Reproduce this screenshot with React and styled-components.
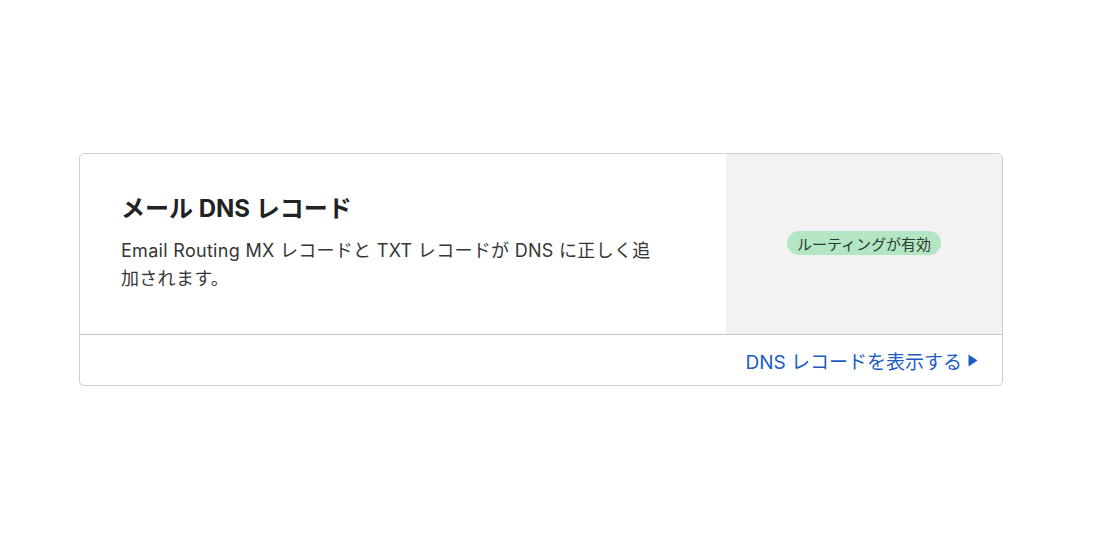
import React from "react";
import styled, { createGlobalStyle } from "styled-components";

const Global = createGlobalStyle`
  html, body { margin: 0; padding: 0; background: #fff; }
  body { font-family: Inter, "Noto Sans CJK JP", sans-serif; }
`;

const Page = styled.div`
  padding: 153px 0 0 79px;
`;

const Card = styled.section`
  width: 924px;
  box-sizing: border-box;
  border: 1px solid #cfcfcf;
  border-radius: 5px;
  overflow: hidden;
  background: #fff;
`;

const Main = styled.div`
  display: grid;
  grid-template-columns: 646px 1fr;
  border-bottom: 1px solid #c9c9c9;
`;

const Content = styled.div`
  padding: 39px 40px 41px 41px;
`;

const Title = styled.h2`
  margin: 0 0 12px;
  font-size: 24px;
  line-height: 32px;
  font-weight: 700;
  color: #222;
`;

const Desc = styled.p`
  margin: 0;
  max-width: 540px;
  font-size: 18px;
  line-height: 28px;
  letter-spacing: 0.3px;
  color: #363636;
`;

const Side = styled.div`
  background: #f2f2f2;
  display: flex;
  align-items: center;
  justify-content: center;
  padding-bottom: 2px;
`;

const Badge = styled.span`
  display: inline-flex;
  align-items: center;
  height: 24px;
  padding: 0 10px;
  border-radius: 12px;
  background: #b3e6c3;
  color: #2c3a31;
  font-size: 15px;
`;

const Footer = styled.div`
  height: 50px;
  display: flex;
  align-items: center;
  justify-content: flex-end;
  padding-right: 24px;
`;

const Link = styled.a`
  display: inline-flex;
  align-items: center;
  gap: 6px;
  color: #1c5cc4;
  font-size: 19px;
  text-decoration: none;
  cursor: pointer;
`;

export default function App() {
  return (
    <>
      <Global />
      <Page>
        <Card>
          <Main>
            <Content>
              <Title>メール DNS レコード</Title>
              <Desc>
                Email Routing MX レコードと TXT レコードが DNS に正しく追加されます。
              </Desc>
            </Content>
            <Side>
              <Badge>ルーティングが有効</Badge>
            </Side>
          </Main>
          <Footer>
            <Link>
              DNS レコードを表示する
              <svg width="10" height="13" viewBox="0 0 10 13" aria-hidden="true">
                <path d="M0.5 0.5 L9.5 6.5 L0.5 12.5 Z" fill="#1c5cc4" />
              </svg>
            </Link>
          </Footer>
        </Card>
      </Page>
    </>
  );
}
